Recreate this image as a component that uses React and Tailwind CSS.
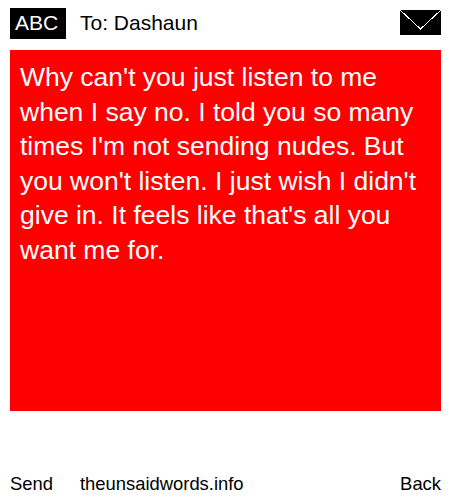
export default function App() {
  return (
    <div className="flex h-[500px] w-[450px] flex-col bg-white px-[10px] pt-[8px] font-['Liberation_Sans',sans-serif] text-black">
      <div className="flex h-[31px] items-center">
        <div className="flex h-[31px] w-[56px] items-center bg-black pb-[2px] pl-[5px] text-[21px] text-white">ABC</div>
        <div className="mb-[2px] ml-[14px] text-[21px]">To: Dashaun</div>
        <svg className="mb-[2px] ml-auto mr-[-1px]" width="41" height="25" viewBox="0 0 41 25" shapeRendering="crispEdges">
          <rect width="41" height="25" fill="#000" />
          <path d="M0 0 L20.5 19 L41 0" stroke="#fff" strokeWidth="1" fill="none" />
        </svg>
      </div>
      <div className="mt-[11px] h-[361px] w-[431px] bg-[#ff0000] px-[10px] pt-[10px] text-[26.5px] leading-[34.5px] text-white">
        Why can't you just listen to me when I say no. I told you so many times I'm not sending nudes. But you won't listen. I just wish I didn't give in. It feels like that's all you want me for.
      </div>
      <div className="mt-[59px] flex text-[18.4px]">
        <span className="w-[70px]">Send</span>
        <span>theunsaidwords.info</span>
        <span className="ml-auto mr-[-1px]">Back</span>
      </div>
    </div>
  );
}
